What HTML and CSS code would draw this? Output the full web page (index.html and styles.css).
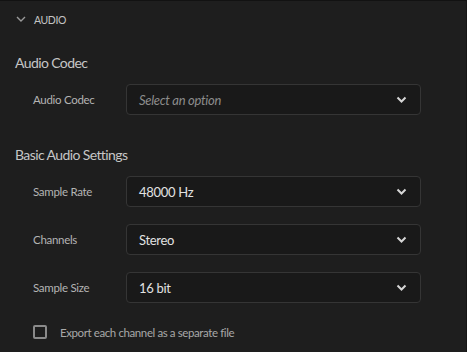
FILE: index.html
```html
<!DOCTYPE html>
<html>
<head>
  <title>Audio Settings</title>
  <link rel="stylesheet" href="styles.css">
</head>
<body>
  <div class="panel">
    <div class="panel-header">
      <svg class="header-chevron" width="10" height="6" viewBox="0 0 10 6">
        <path d="M1 1 L5 5 L9 1" fill="none" stroke="#9a9a9a" stroke-width="1.4"/>
      </svg>
      <span class="header-title">AUDIO</span>
    </div>

    <div class="section-title first">Audio Codec</div>
    <div class="field">
      <div class="field-label">Audio Codec</div>
      <div class="select">
        <span class="select-value placeholder">Select an option</span>
        <svg class="select-chevron" width="11" height="7" viewBox="0 0 11 7">
          <path d="M1.5 1.5 L5.5 5.5 L9.5 1.5" fill="none" stroke="#d6d6d6" stroke-width="2"/>
        </svg>
      </div>
    </div>

    <div class="section-title">Basic Audio Settings</div>
    <div class="field">
      <div class="field-label">Sample Rate</div>
      <div class="select">
        <span class="select-value">48000 Hz</span>
        <svg class="select-chevron" width="11" height="7" viewBox="0 0 11 7">
          <path d="M1.5 1.5 L5.5 5.5 L9.5 1.5" fill="none" stroke="#d6d6d6" stroke-width="2"/>
        </svg>
      </div>
    </div>
    <div class="field">
      <div class="field-label">Channels</div>
      <div class="select">
        <span class="select-value">Stereo</span>
        <svg class="select-chevron" width="11" height="7" viewBox="0 0 11 7">
          <path d="M1.5 1.5 L5.5 5.5 L9.5 1.5" fill="none" stroke="#d6d6d6" stroke-width="2"/>
        </svg>
      </div>
    </div>
    <div class="field">
      <div class="field-label">Sample Size</div>
      <div class="select">
        <span class="select-value">16 bit</span>
        <svg class="select-chevron" width="11" height="7" viewBox="0 0 11 7">
          <path d="M1.5 1.5 L5.5 5.5 L9.5 1.5" fill="none" stroke="#d6d6d6" stroke-width="2"/>
        </svg>
      </div>
    </div>

    <label class="checkbox-row">
      <span class="checkbox"></span>
      <span class="checkbox-label">Export each channel as a separate file</span>
    </label>
  </div>
</body>
</html>
```

FILE: styles.css
```css
body {
  margin: 0;
  padding: 0;
  background-color: #1e1e1e;
  font-family: Lato, "Open Sans", sans-serif;
  color: #c8c8c8;
}

.panel {
  width: 467px;
  height: 352px;
  box-sizing: border-box;
  border-top: 1px solid #121212;
  border-right: 1px solid #161616;
  background-color: #1e1e1e;
}

.panel-header {
  height: 37px;
  display: flex;
  align-items: center;
  padding-left: 16px;
}

.header-chevron {
  margin-right: 8px;
  margin-top: -2px;
}

.header-title {
  font-size: 10.5px;
  color: #c4c4c4;
  letter-spacing: -0.4px;
}

.section-title {
  font-size: 14px;
  line-height: 20px;
  color: #c6c6c6;
  padding-left: 15px;
  margin-top: 30px;
  margin-bottom: 11px;
  letter-spacing: -0.6px;
}

.section-title.first {
  margin-top: 15px;
}

.field {
  display: flex;
  align-items: center;
  padding-left: 33px;
  margin-bottom: 17px;
}

.field-label {
  width: 93px;
  font-size: 11.5px;
  color: #b4b4b4;
  letter-spacing: -0.3px;
}

.select {
  width: 295px;
  height: 31px;
  box-sizing: border-box;
  border: 1px solid #353535;
  border-radius: 4px;
  background-color: #191919;
  display: flex;
  align-items: center;
  justify-content: space-between;
  padding: 0 13px 0 12px;
}

.select-value {
  font-size: 13px;
  color: #e2e2e2;
  letter-spacing: -0.3px;
}

.select-value.placeholder {
  font-style: italic;
  color: #8c8c8c;
}

.checkbox-row {
  display: flex;
  align-items: center;
  padding-left: 33px;
  margin-top: 22px;
}

.checkbox {
  width: 14px;
  height: 14px;
  box-sizing: border-box;
  border: 2px solid #8a8a8a;
  border-radius: 2px;
  margin-right: 13px;
}

.checkbox-label {
  font-size: 11.5px;
  color: #a8a8a8;
  letter-spacing: -0.4px;
}
```
